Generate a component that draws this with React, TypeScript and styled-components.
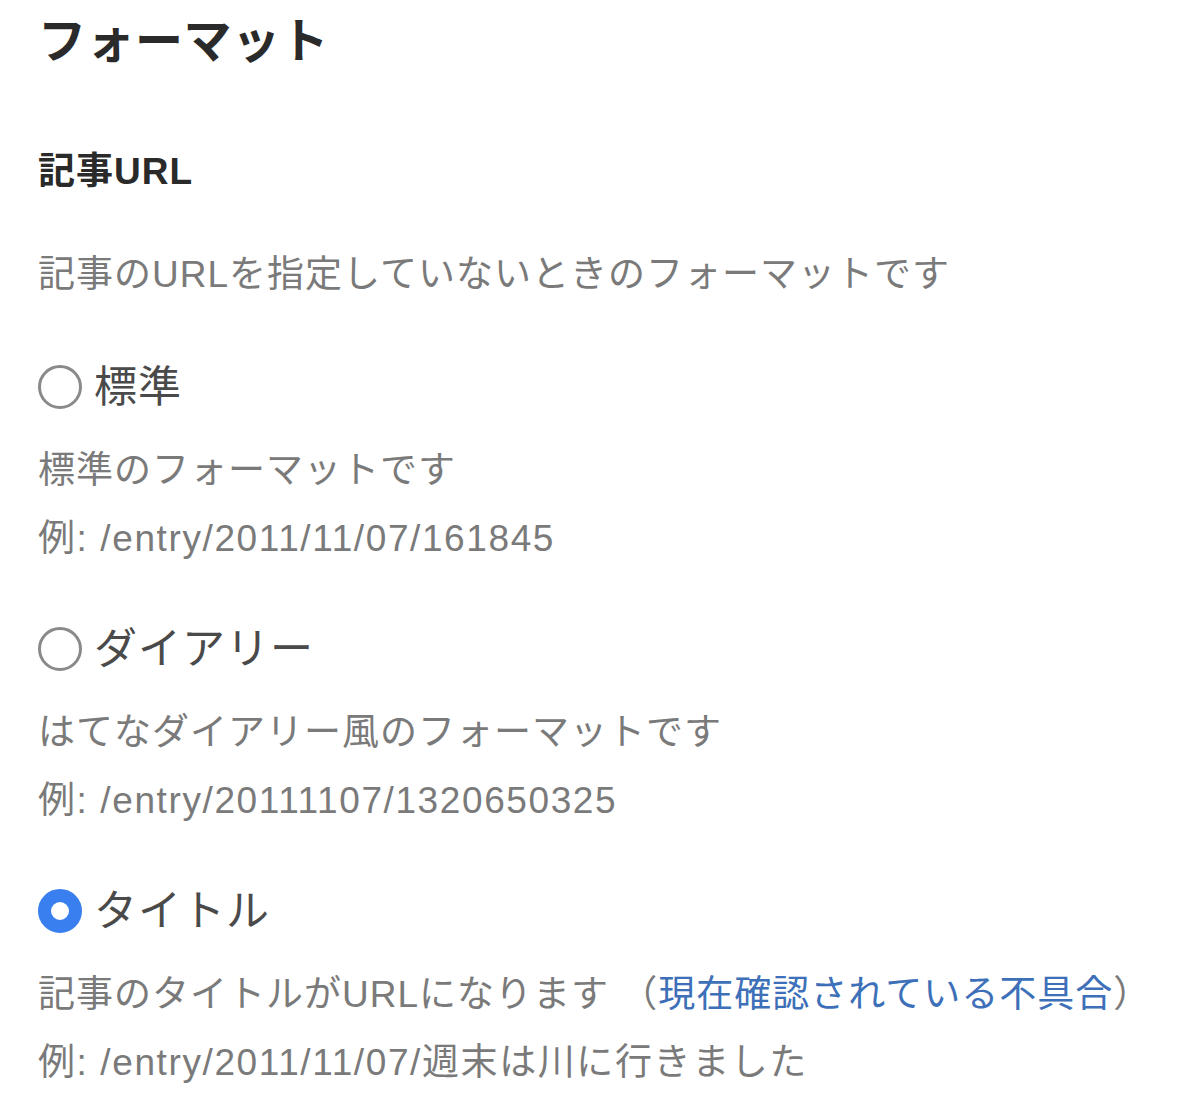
import { createGlobalStyle } from 'styled-components';
import styled from 'styled-components';

const GlobalStyle = createGlobalStyle`
  body {
    margin: 0;
    background: #ffffff;
    font-family: 'Liberation Sans', 'Noto Sans CJK JP', sans-serif;
  }
`;

const Page = styled.div`
  box-sizing: border-box;
  padding: 6px 38px 0;
  width: 1200px;
  height: 1117px;
  overflow: hidden;
`;

const Title = styled.h1`
  margin: 0;
  font-size: 48px;
  line-height: 72px;
  font-weight: 700;
  color: #2a2a2a;
  letter-spacing: 0.5px;
`;

const Heading = styled.h2`
  margin: 69px 0 0;
  font-size: 37px;
  line-height: 50px;
  font-weight: 700;
  color: #2a2a2a;
  letter-spacing: 1px;
`;

const Lead = styled.p`
  margin: 51px 0 0;
  font-size: 37px;
  line-height: 54px;
  color: #7a7a7a;
  letter-spacing: 1px;
`;

const OptionList = styled.div`
  display: flex;
  flex-direction: column;
  gap: 46px;
  margin-top: 55px;
`;

const OptionItem = styled.div`
  display: flex;
  flex-direction: column;
`;

const RadioRow = styled.label`
  display: flex;
  align-items: center;
  gap: 12px;
  height: 60px;
  margin-bottom: 20px;
`;

const Radio = styled.span<{ $checked: boolean }>`
  box-sizing: border-box;
  width: 44px;
  height: 44px;
  border-radius: 50%;
  background: #ffffff;
  border: ${(p) => (p.$checked ? '13px solid #3a7ff0' : '3px solid #8a8a8a')};
  flex-shrink: 0;
`;

const RadioLabel = styled.span`
  font-size: 43px;
  line-height: 60px;
  color: #4a4a4a;
  letter-spacing: 1px;
`;

const Description = styled.p<{ $example?: boolean }>`
  margin: 0;
  font-size: 37px;
  line-height: 68px;
  color: #7a7a7a;
  white-space: nowrap;
  letter-spacing: ${(p) => (p.$example ? '1.6px' : '1px')};
`;

const Link = styled.a`
  color: #3d70b8;
  text-decoration: none;
`;

type Option = {
  id: string;
  label: string;
  description: React.ReactNode;
  example: string;
  checked?: boolean;
};

const options: Option[] = [
  {
    id: 'standard',
    label: '標準',
    description: '標準のフォーマットです',
    example: '例: /entry/2011/11/07/161845',
  },
  {
    id: 'diary',
    label: 'ダイアリー',
    description: 'はてなダイアリー風のフォーマットです',
    example: '例: /entry/20111107/1320650325',
  },
  {
    id: 'title',
    label: 'タイトル',
    description: (
      <>
        記事のタイトルがURLになります （<Link href="#">現在確認されている不具合</Link>）
      </>
    ),
    example: '例: /entry/2011/11/07/週末は川に行きました',
    checked: true,
  },
];

export default function App() {
  return (
    <Page>
      <GlobalStyle />
      <Title>フォーマット</Title>
      <Heading>記事URL</Heading>
      <Lead>記事のURLを指定していないときのフォーマットです</Lead>
      <OptionList>
        {options.map((o) => (
          <OptionItem key={o.id}>
            <RadioRow>
              <Radio $checked={!!o.checked} />
              <RadioLabel>{o.label}</RadioLabel>
            </RadioRow>
            <Description>{o.description}</Description>
            <Description $example>{o.example}</Description>
          </OptionItem>
        ))}
      </OptionList>
    </Page>
  );
}
